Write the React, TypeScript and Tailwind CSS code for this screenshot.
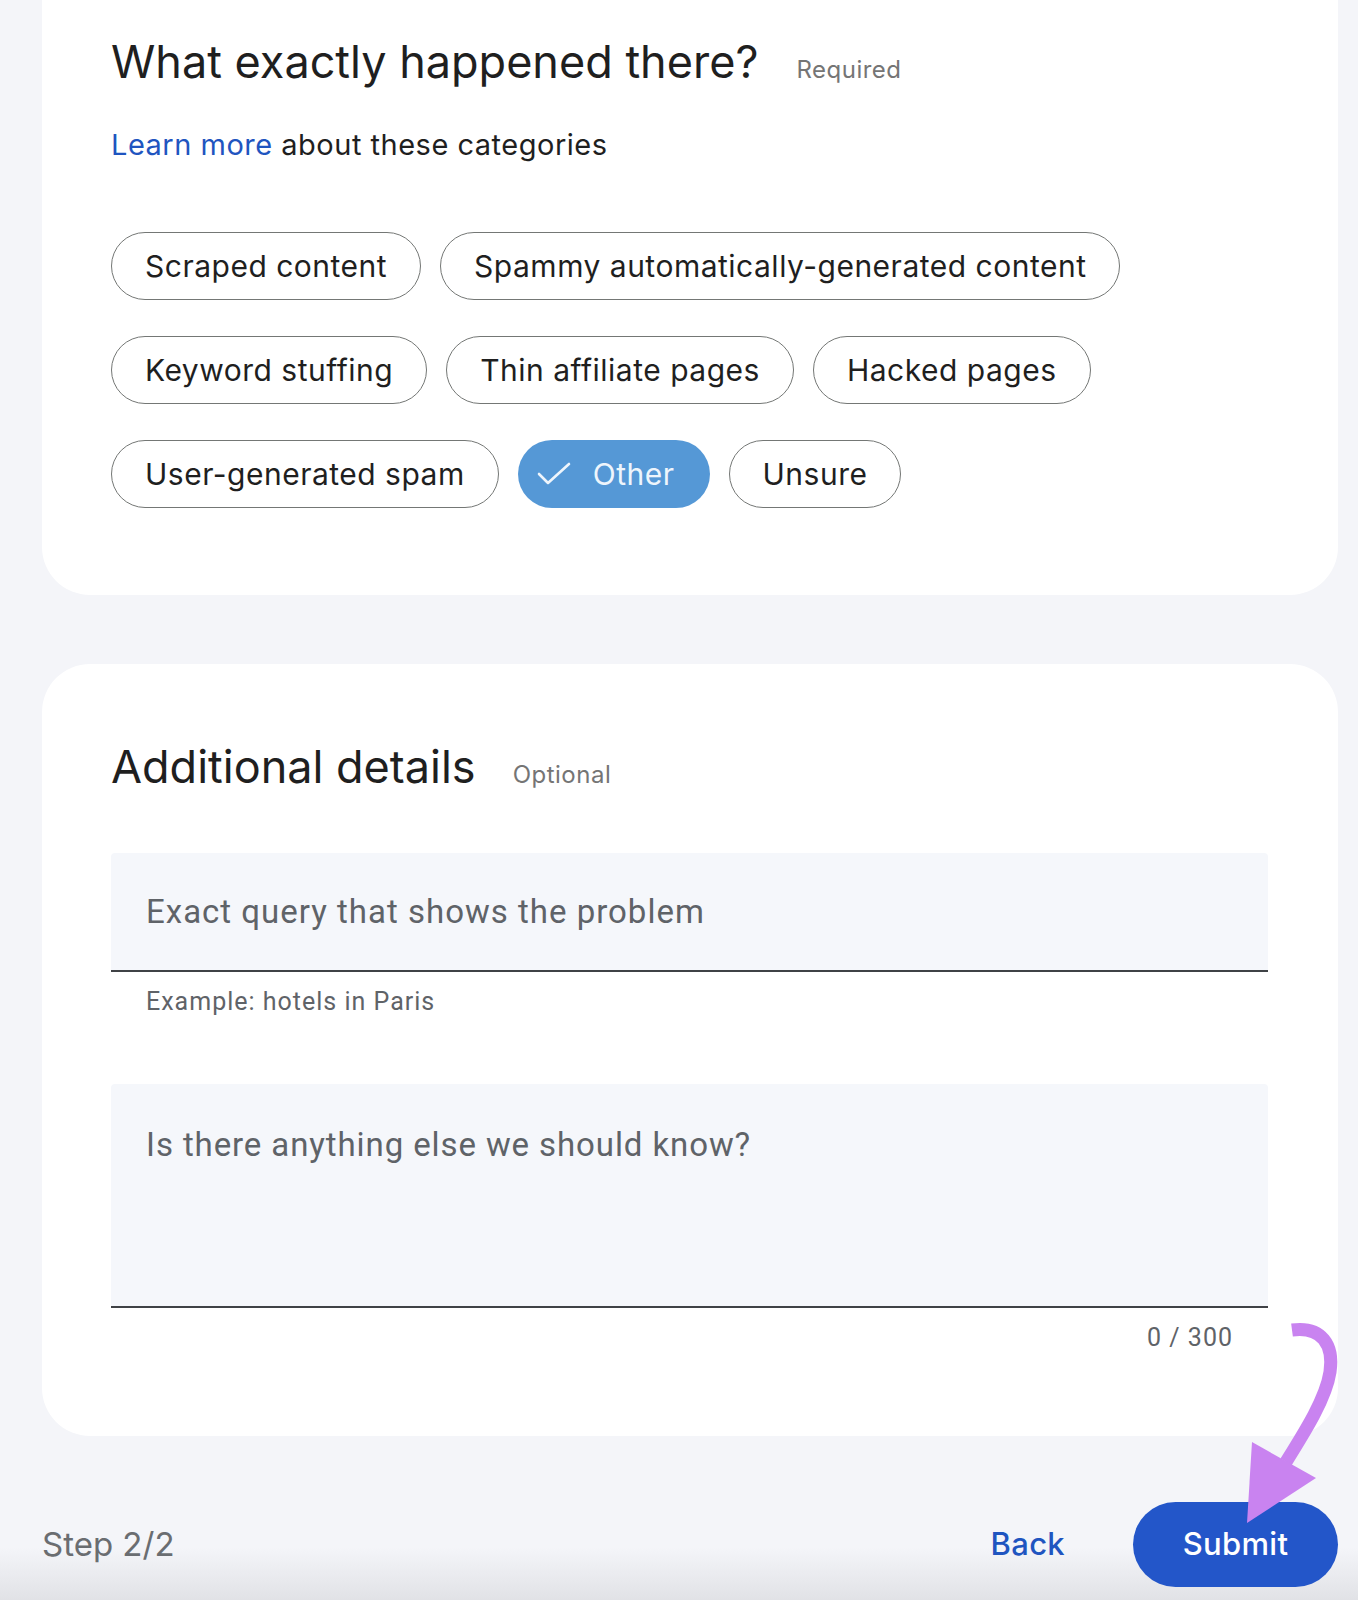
import React from "react";

const gs = { fontFamily: "Inter, 'Open Sans', sans-serif" } as const;
const rb = { fontFamily: "Roboto, 'Liberation Sans', sans-serif" } as const;

function Chip({ label, selected = false }: { label: string; selected?: boolean }) {
  if (selected) {
    return (
      <div className="h-[68px] rounded-full bg-[#5598d6] pl-[19px] pr-[35px] flex items-center gap-[22px] text-[#eef5fc] text-[30px] tracking-[0.5px]">
        <svg width="34" height="26" viewBox="0 0 34 26" fill="none">
          <path d="M2 13 L11 22 L32 3" stroke="#eef5fc" strokeWidth="2.6" strokeLinecap="round" strokeLinejoin="round" />
        </svg>
        <span>{label}</span>
      </div>
    );
  }
  return (
    <div className="h-[68px] rounded-full border-[1.5px] border-[#747775] px-[33px] flex items-center text-[30px] tracking-[0.5px] text-[#1f1f1f]">
      {label}
    </div>
  );
}

export default function App() {
  return (
    <div className="w-full h-[1600px] overflow-hidden bg-[#f4f5f9] flex flex-col" style={gs}>
      <div className="flex flex-col pl-[42px] pr-[20px]">
        {/* Card 1 */}
        <div className="bg-white rounded-b-[48px] h-[595px] pl-[69px] pt-[32px]">
          <div className="flex items-baseline gap-[38px]">
            <h1 className="text-[45px] text-[#1f1f1f] font-normal leading-[60px]">What exactly happened there?</h1>
            <span className="text-[24px] text-[#757575] tracking-[0.5px]">Required</span>
          </div>
          <p className="mt-[35px] text-[29px] tracking-[0.5px] text-[#1f1f1f] leading-[36px]">
            <span className="text-[#1f55c0]">Learn more</span> about these categories
          </p>
          <div className="mt-[69px] flex flex-col gap-[36px]">
            <div className="flex gap-[19px]">
              <Chip label="Scraped content" />
              <Chip label="Spammy automatically-generated content" />
            </div>
            <div className="flex gap-[19px]">
              <Chip label="Keyword stuffing" />
              <Chip label="Thin affiliate pages" />
              <Chip label="Hacked pages" />
            </div>
            <div className="flex gap-[19px]">
              <Chip label="User-generated spam" />
              <Chip label="Other" selected />
              <Chip label="Unsure" />
            </div>
          </div>
        </div>

        {/* Card 2 */}
        <div className="mt-[69px] bg-white rounded-[48px] h-[772px] pl-[69px] pr-[70px] pt-[73px]">
          <div className="flex items-baseline gap-[37px]">
            <h2 className="text-[45px] text-[#1f1f1f] font-normal leading-[60px]">Additional details</h2>
            <span className="text-[24px] text-[#757575] tracking-[0.5px]">Optional</span>
          </div>
          <div className="mt-[56px] h-[119px] bg-[#f5f7fb] rounded-t-[4px] border-b-[2px] border-[#3f4246] flex items-center pl-[35px]" style={rb}>
            <span className="text-[33px] tracking-[1px] text-[#5f6368]">Exact query that shows the problem</span>
          </div>
          <div className="pl-[35px] pt-[11px] h-[112px]" style={rb}>
            <span className="text-[25px] tracking-[1px] text-[#5f6368]">Example: hotels in Paris</span>
          </div>
          <div className="h-[224px] bg-[#f5f7fb] rounded-t-[4px] border-b-[2px] border-[#3f4246] pl-[35px] pt-[36px]" style={rb}>
            <span className="text-[33px] tracking-[0.9px] text-[#5f6368]">Is there anything else we should know?</span>
          </div>
          <div className="flex justify-end pr-[35px] pt-[11px]" style={rb}>
            <span className="text-[25px] text-[#5f6368] tracking-[1px]">0 / 300</span>
          </div>
        </div>
      </div>

      {/* Footer */}
      <div className="flex-1 pl-[42px] pr-[20px] pt-[66px] bg-[linear-gradient(to_bottom,#f4f5f9_0%,#f4f5f9_68%,#e1e2e6_100%)]">
        <div className="h-[85px] flex items-center justify-between">
          <span className="text-[33px] text-[#6a6d71]">Step 2/2</span>
          <div className="flex items-center gap-[68px]">
            <span className="text-[31px] font-medium text-[#1f55c0] tracking-[0.3px]">Back</span>
            <div className="h-[85px] w-[205px] rounded-full bg-[#2356c9] flex items-center justify-center text-[31px] font-medium text-white tracking-[0.3px]">
              Submit
            </div>
          </div>
        </div>
      </div>

      {/* purple annotation arrow */}
      <svg className="absolute left-0 top-0 pointer-events-none" width="1358" height="1600" viewBox="0 0 1358 1600">
        <path d="M1292 1330 C1322 1326 1334 1345 1330 1372 C1326 1398 1306 1430 1286 1462" stroke="#c983f0" strokeWidth="13" fill="none" strokeLinecap="butt" />
        <polygon points="1252,1442 1316,1478 1247,1523" fill="#c983f0" />
      </svg>
    </div>
  );
}
